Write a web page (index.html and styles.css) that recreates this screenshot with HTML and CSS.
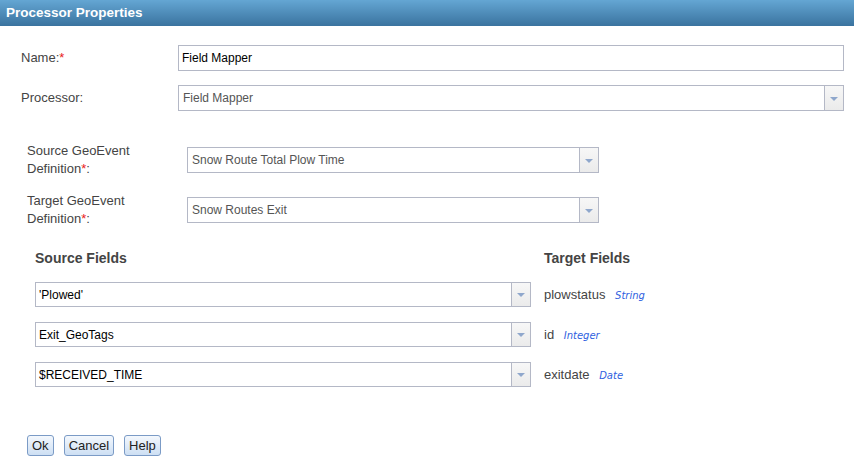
FILE: index.html
```html
<!DOCTYPE html>
<html>
<head>
  <title>Processor Properties</title>
  <link rel="stylesheet" href="styles.css">
</head>
<body>
  <div class="dialog">
    <div class="dialog-title">Processor Properties</div>

    <form class="dialog-body" id="processorForm">
      <!-- General processor settings -->
      <div class="form-row">
        <label for="name">Name:<span class="req">*</span></label>
        <input type="text" id="name" class="text-input" value="Field Mapper">
      </div>

      <div class="form-row">
        <label>Processor:</label>
        <div class="combo wide">
          <span class="combo-text">Field Mapper</span>
          <span class="combo-arrow"></span>
        </div>
      </div>

      <!-- Field mapper specific settings -->
      <div class="mapper">
        <div class="form-row def-row">
          <label>Source GeoEvent<br>Definition<span class="req">*</span>:</label>
          <div class="combo def">
            <span class="combo-text">Snow Route Total Plow Time</span>
            <span class="combo-arrow"></span>
          </div>
        </div>

        <div class="form-row def-row">
          <label>Target GeoEvent<br>Definition<span class="req">*</span>:</label>
          <div class="combo def">
            <span class="combo-text">Snow Routes Exit</span>
            <span class="combo-arrow"></span>
          </div>
        </div>
      </div>

      <div class="field-grid">
        <div class="grid-head">Source Fields</div>
        <div class="grid-head">Target Fields</div>

        <div class="combo field">
          <span class="combo-text dark">'Plowed'</span>
          <span class="combo-arrow"></span>
        </div>
        <div class="target">plowstatus <span class="type">String</span></div>

        <div class="combo field">
          <span class="combo-text dark">Exit_GeoTags</span>
          <span class="combo-arrow"></span>
        </div>
        <div class="target">id <span class="type">Integer</span></div>

        <div class="combo field">
          <span class="combo-text dark">$RECEIVED_TIME</span>
          <span class="combo-arrow"></span>
        </div>
        <div class="target">exitdate <span class="type">Date</span></div>
      </div>

      <div class="buttons">
        <button type="submit">Ok</button>
        <button type="button">Cancel</button>
        <button type="button">Help</button>
      </div>
    </form>
  </div>
</body>
</html>
```

FILE: styles.css
```css
body { margin: 0; background: #fff; font-family: "Liberation Sans", Arial, sans-serif; font-size: 13px; color: #444; }

.dialog { width: 854px; height: 470px; }
.dialog-title { height: 26px; line-height: 26px; padding-left: 6px; color: #fff; font-weight: bold; font-size: 13.5px;
  background: linear-gradient(#64a6d3, #3a739f); }

.dialog-body { padding: 19px 10px 0 21px; }
.form-row { display: flex; align-items: center; margin-bottom: 14px; }
.form-row label { width: 157px; line-height: 18px; }
.req { color: #e8201a; }

.text-input { box-sizing: border-box; width: 666px; height: 26px; margin: 0; padding: 0 3px; border: 1px solid #b4b8c6;
  font-family: inherit; font-size: 12px; color: #000; outline: none; }

.combo { box-sizing: border-box; display: flex; height: 26px; border: 1px solid #b4b8c6; background: #fff; }
.combo.wide { width: 666px; }
.combo.def { width: 412px; }
.combo.field { width: 496px; height: 25px; }
.combo-text { flex: 1; padding-left: 4px; display: flex; align-items: center; font-size: 12px; color: #555; }
.combo-text.dark { color: #000; padding-left: 3px; }
.combo-arrow { width: 18px; border-left: 1px solid #b4b8c6; background: linear-gradient(#f7f7f7, #ebebeb);
  display: flex; align-items: center; justify-content: center; }
.combo-arrow::after { content: ""; border-left: 4px solid transparent; border-right: 4px solid transparent;
  border-top: 4px solid #8fa7cc; margin-top: 1px; }

.mapper { margin-top: 31px; padding-left: 6px; }
.def-row label { width: 160px; }

.field-grid { display: grid; grid-template-columns: 496px 1fr; column-gap: 13px; row-gap: 15px;
  margin-top: 21px; padding-left: 14px; align-items: center; }
.grid-head { font-weight: bold; font-size: 14px; line-height: 18px; color: #444; }
.target { font-size: 13px; color: #444; }
.type { margin-left: 6px; font-family: "DejaVu Sans", Verdana, sans-serif; font-style: italic; font-size: 10px; color: #2f5fe0; }

.buttons { display: flex; gap: 10px; margin-top: 48px; padding-left: 6px; }
.buttons button { height: 21px; padding: 0 4px; border: 1px solid #7b9bc6; border-radius: 3px; cursor: pointer;
  background: linear-gradient(#f4f8fd, #cddff3); font-family: inherit; font-size: 13px; color: #222; }
```
